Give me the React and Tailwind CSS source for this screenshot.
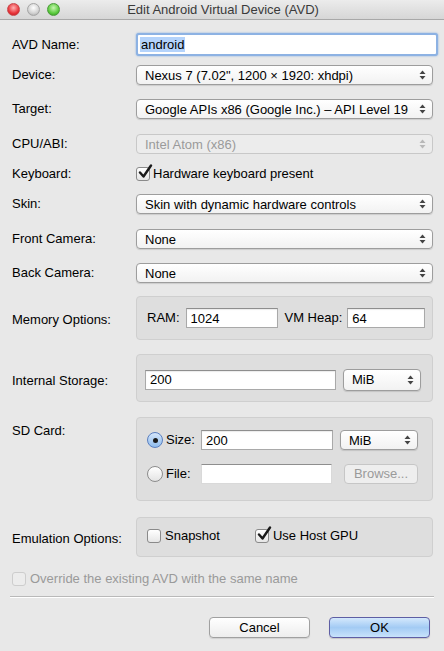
import React from "react";

const font = { fontFamily: '"Liberation Sans", Arial, sans-serif' };

const Arrows = ({ dim }) => (
  <svg width="7" height="10" viewBox="0 0 7 10" className="shrink-0">
    <path d="M3.5 0.5 L6.5 4 L0.5 4 Z" fill={dim ? "#b8b8b8" : "#444"} />
    <path d="M3.5 9.5 L6.5 6 L0.5 6 Z" fill={dim ? "#b8b8b8" : "#444"} />
  </svg>
);

const Select = ({ value, disabled, className = "" }) => (
  <div
    className={`flex items-center justify-between h-[20px] rounded-[4px] border pl-[8px] pr-[6px] text-[13px] leading-none ${
      disabled
        ? "border-[#c8c8c8] bg-[#ececec] text-[#9a9a9a]"
        : "border-[#9d9d9d] bg-gradient-to-b from-white to-[#f2f2f2] text-black shadow-[0_1px_1px_rgba(0,0,0,0.12)]"
    } ${className}`}
  >
    <span className="whitespace-nowrap">{value}</span>
    <Arrows dim={disabled} />
  </div>
);

const TextBox = ({ value = "", className = "" }) => (
  <div
    className={`h-[20px] flex items-center bg-white border border-[#a9a9a9] border-t-[#8e8e8e] pl-[4px] text-[13px] leading-none shadow-[inset_0_1px_1px_rgba(0,0,0,0.08)] ${className}`}
  >
    {value}
  </div>
);

const Check = ({ checked, disabled }) => (
  <div
    className={`relative w-[14px] h-[14px] rounded-[3px] border shrink-0 ${
      disabled
        ? "border-[#cdcdcd] bg-[#ececec]"
        : "border-[#8a8a8a] bg-gradient-to-b from-white to-[#e6e6e6]"
    } ${checked ? "border-[#5b7bb5] from-[#d8e8fb] to-[#9dc3ee]" : ""}`}
  >
    {checked && (
      <svg width="16" height="16" viewBox="0 0 16 16" className="absolute left-[0px] top-[-4px]">
        <path d="M3 8.5 L6.5 12.5 L14 1.5" stroke="#1a1a1a" strokeWidth="2.4" fill="none" strokeLinecap="round" strokeLinejoin="round" />
      </svg>
    )}
  </div>
);

const Radio = ({ selected }) => (
  <div
    className={`w-[16px] h-[16px] rounded-full border flex items-center justify-center shrink-0 ${
      selected
        ? "border-[#5a7fc0] bg-gradient-to-b from-[#d5e6fb] to-[#8fbcec]"
        : "border-[#8c8c8c] bg-gradient-to-b from-white to-[#e4e4e4]"
    }`}
  >
    {selected && <div className="w-[5px] h-[5px] rounded-full bg-[#1a1a1a]" />}
  </div>
);

const Label = ({ children, className = "" }) => (
  <div className={`w-[136px] pl-[12px] shrink-0 text-[13px] text-black ${className}`}>{children}</div>
);

const Group = ({ children, className = "" }) => (
  <div className={`w-[297px] rounded-[4px] border border-[#cfcfcf] bg-[#dedede] ${className}`}>{children}</div>
);

export default function App() {
  return (
    <div className="w-[444px] h-[651px] bg-[#e8e8e8] overflow-hidden" style={font}>
      {/* title bar */}
      <div className="relative h-[20px] bg-gradient-to-b from-[#ececec] to-[#d6d6d6] border-b border-[#a8a8a8] flex items-center justify-center">
        <div className="absolute left-[7px] top-[3px] flex gap-[7px]">
          <div className="w-[13px] h-[13px] rounded-full border border-[#c9474a] bg-[radial-gradient(circle_at_50%_35%,#ffb3b3,#e8353a_60%,#b5151b)]" />
          <div className="w-[13px] h-[13px] rounded-full border border-[#a5a5a5] bg-[radial-gradient(circle_at_50%_35%,#ffffff,#d2d2d2_60%,#9e9e9e)]" />
          <div className="w-[13px] h-[13px] rounded-full border border-[#4a9a3a] bg-[radial-gradient(circle_at_50%_35%,#c8f5b3,#5ccb3e_60%,#2e8f1c)]" />
        </div>
        <span className="text-[13px] text-[#3a3a3a] ml-[2px]">Edit Android Virtual Device (AVD)</span>
      </div>

      {/* AVD Name */}
      <div className="flex items-center mt-[13px] h-[23px]">
        <Label className="w-[133px]">AVD Name:</Label>
        <div className="w-[302px] h-[23px] rounded-[3px] border-[2px] border-[#8db2e3] bg-white flex items-center pl-[2px] shadow-[0_0_2px_#7aa7e0]">
          <span className="text-[13px] leading-[15px] bg-[#b4d3fb] px-[1px]">android</span>
        </div>
      </div>

      <div className="flex items-center mt-[9px] h-[20px]">
        <Label>Device:</Label>
        <Select value={'Nexus 7 (7.02", 1200 × 1920: xhdpi)'} className="w-[297px]" />
      </div>
      <div className="flex items-center mt-[14px] h-[20px]">
        <Label>Target:</Label>
        <Select value="Google APIs x86 (Google Inc.) – API Level 19" className="w-[297px]" />
      </div>
      <div className="flex items-center mt-[15px] h-[20px]">
        <Label>CPU/ABI:</Label>
        <Select value="Intel Atom (x86)" disabled className="w-[297px]" />
      </div>
      <div className="flex items-center mt-[10px] h-[20px]">
        <Label>Keyboard:</Label>
        <div className="flex items-center gap-[3px]">
          <Check checked />
          <span className="text-[13px]">Hardware keyboard present</span>
        </div>
      </div>
      <div className="flex items-center mt-[10px] h-[20px]">
        <Label>Skin:</Label>
        <Select value="Skin with dynamic hardware controls" className="w-[297px]" />
      </div>
      <div className="flex items-center mt-[15px] h-[20px]">
        <Label>Front Camera:</Label>
        <Select value="None" className="w-[297px]" />
      </div>
      <div className="flex items-center mt-[14px] h-[20px]">
        <Label>Back Camera:</Label>
        <Select value="None" className="w-[297px]" />
      </div>

      {/* Memory */}
      <div className="flex items-center mt-[13px]">
        <Label className="pt-[4px]">Memory Options:</Label>
        <Group className="h-[44px] flex items-center pl-[10px] text-[13px]">
          <span>RAM:</span>
          <TextBox value="1024" className="w-[92px] ml-[6px]" />
          <span className="ml-[7px]">VM Heap:</span>
          <TextBox value="64" className="w-[78px] ml-[5px]" />
        </Group>
      </div>

      {/* Internal storage */}
      <div className="flex items-center mt-[14px]">
        <Label className="pt-[5px]">Internal Storage:</Label>
        <Group className="h-[48px] flex items-center pl-[8px] pt-[3px]">
          <TextBox value="200" className="w-[191px]" />
          <Select value="MiB" className="w-[78px] ml-[7px] h-[22px]" />
        </Group>
      </div>

      {/* SD card */}
      <div className="flex items-start mt-[15px]">
        <Label className="pt-[4px]">SD Card:</Label>
        <Group className="h-[84px] pl-[10px] pt-[12px]">
          <div className="flex items-center h-[20px] text-[13px]">
            <Radio selected />
            <span className="ml-[3px] w-[35px]">Size:</span>
            <TextBox value="200" className="w-[132px]" />
            <Select value="MiB" className="w-[78px] ml-[7px]" />
          </div>
          <div className="flex items-center h-[20px] mt-[14px] text-[13px]">
            <Radio />
            <span className="ml-[3px] w-[35px]">File:</span>
            <TextBox className="w-[131px] border-[#d9d9d9] shadow-none" />
            <div className="ml-[12px] w-[74px] h-[20px] rounded-[4px] border border-[#c6c6c6] bg-[#eeeeee] text-[#9a9a9a] flex items-center justify-center text-[13px]">
              Browse...
            </div>
          </div>
        </Group>
      </div>

      {/* Emulation */}
      <div className="flex items-center mt-[16px]">
        <Label className="pt-[3px]">Emulation Options:</Label>
        <Group className="h-[40px] flex items-center pl-[10px] pb-[3px] text-[13px]">
          <Check />
          <span className="ml-[4px]">Snapshot</span>
          <div className="ml-[35px]">
            <Check checked />
          </div>
          <span className="ml-[4px]">Use Host GPU</span>
        </Group>
      </div>

      {/* Override */}
      <div className="flex items-center mt-[15px] pl-[12px] h-[14px] text-[13px] text-[#9a9a9a]">
        <Check disabled />
        <span className="ml-[4px]">Override the existing AVD with the same name</span>
      </div>

      <div className="mx-[10px] mt-[10px] border-t border-[#b9b9b9] border-b-white border-b" />

      {/* buttons */}
      <div className="flex justify-end gap-[19px] pr-[14px] mt-[19px]">
        <div className="w-[101px] h-[21px] rounded-[4px] border border-[#a0a0a0] bg-gradient-to-b from-white to-[#ededed] text-[13px] flex items-center justify-center shadow-[0_1px_1px_rgba(0,0,0,0.1)]">
          Cancel
        </div>
        <div className="w-[101px] h-[21px] rounded-[4px] border border-[#5e5ea4] bg-gradient-to-b from-[#d4e8fc] via-[#a3cbf4] to-[#c8e3fb] text-[13px] flex items-center justify-center shadow-[0_1px_1px_rgba(0,0,0,0.15)]">
          OK
        </div>
      </div>
    </div>
  );
}
